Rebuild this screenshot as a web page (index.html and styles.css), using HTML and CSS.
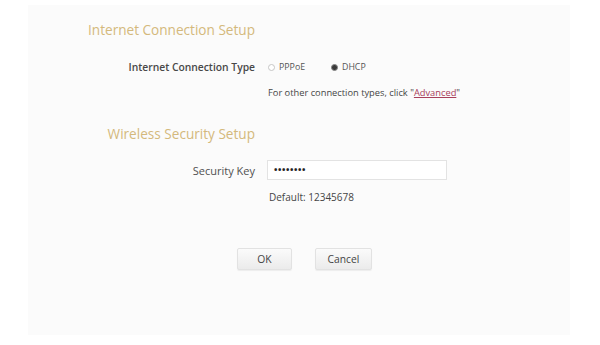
FILE: index.html
```html
<!DOCTYPE html>
<html>
<head>
<meta charset="utf-8">
<link rel="stylesheet" href="styles.css">
</head>
<body>
<div class="panel">
  <div class="row title-row first">
    <div class="cell-label section-title">Internet Connection Setup</div>
  </div>
  <div class="row conn-row">
    <div class="cell-label label">Internet Connection Type</div>
    <div class="cell-ctrl radios">
      <span class="radio-item"><span class="radio"></span>PPPoE</span>
      <span class="radio-item"><span class="radio checked"></span>DHCP</span>
    </div>
  </div>
  <div class="row hint-row">
    <div class="cell-label"></div>
    <div class="cell-ctrl hint">For other connection types, click "<a class="adv" href="#">Advanced</a>"</div>
  </div>

  <div class="row title-row second">
    <div class="cell-label section-title">Wireless Security Setup</div>
  </div>
  <div class="row key-row">
    <div class="cell-label label label-light">Security Key</div>
    <div class="cell-ctrl">
      <div class="input">&bull;&bull;&bull;&bull;&bull;&bull;&bull;&bull;</div>
    </div>
  </div>
  <div class="row default-row">
    <div class="cell-label"></div>
    <div class="cell-ctrl hint default">Default: 12345678</div>
  </div>

  <div class="buttons">
    <div class="btn ok">OK</div>
    <div class="btn cancel">Cancel</div>
  </div>
</div>
</body>
</html>
```
FILE: styles.css
```css
html, body {
  margin: 0;
  padding: 0;
  background: #ffffff;
}
body {
  padding: 5px 30px 10px 28px;
  font-family: "Open Sans", "DejaVu Sans", sans-serif;
  color: #444;
}
.panel {
  background: #fbfbfb;
  height: 330px;
  display: flex;
  flex-direction: column;
  box-sizing: border-box;
  padding-top: 15px;
}
.row {
  display: flex;
  align-items: center;
}
.cell-label {
  width: 227px;
  flex: none;
  text-align: right;
}
.cell-ctrl {
  margin-left: 13px;
}
.section-title {
  color: #d4b97c;
  font-size: 13.6px;
  line-height: 20px;
  white-space: nowrap;
}
.title-row.second { margin-top: 25px; }
.label {
  font-size: 10.3px;
  font-weight: 600;
  color: #484848;
  white-space: nowrap;
}
.label.label-light {
  font-size: 11px;
  font-weight: 400;
  color: #505050;
}
.conn-row { margin-top: 19px; height: 16px; }
.radios {
  display: flex;
  font-size: 8.8px;
  color: #555;
}
.radio-item {
  display: flex;
  align-items: center;
  width: 63px;
}
.radio {
  width: 5px;
  height: 5px;
  border: 1px solid #c6c6c6;
  border-radius: 50%;
  margin-right: 4px;
  background: #fff;
  box-sizing: content-box;
}
.radio.checked {
  background: #3a3a3a;
  border-color: #888;
}
.hint {
  font-size: 9.3px;
  line-height: 12px;
  color: #454545;
  white-space: nowrap;
}
.hint-row { margin-top: 12px; }
.adv { color: #a8405c; }
.key-row { margin-top: 16px; height: 20px; }
.input {
  margin-left: -1px;
  width: 180px;
  height: 20px;
  box-sizing: border-box;
  border: 1px solid #e3e3e3;
  background: #fff;
  font-size: 9px;
  font-weight: 700;
  line-height: 18px;
  padding-left: 6px;
  color: #222;
  letter-spacing: 0.6px;
}
.default-row { margin-top: 11px; }
.default { font-size: 10px; margin-left: 14px; }
.buttons {
  display: flex;
  gap: 23px;
  margin-left: 209px;
  margin-top: 45px;
}
.btn {
  height: 22px;
  box-sizing: border-box;
  border: 1px solid #e2e2e2;
  border-radius: 2px;
  background: linear-gradient(#fbfbfb, #ebebeb);
  font-size: 10.3px;
  line-height: 20px;
  text-align: center;
  color: #444;
  box-shadow: 0 1px 1px rgba(0,0,0,0.06);
}
.btn.ok { width: 55px; }
.btn.cancel { width: 57px; }
```
